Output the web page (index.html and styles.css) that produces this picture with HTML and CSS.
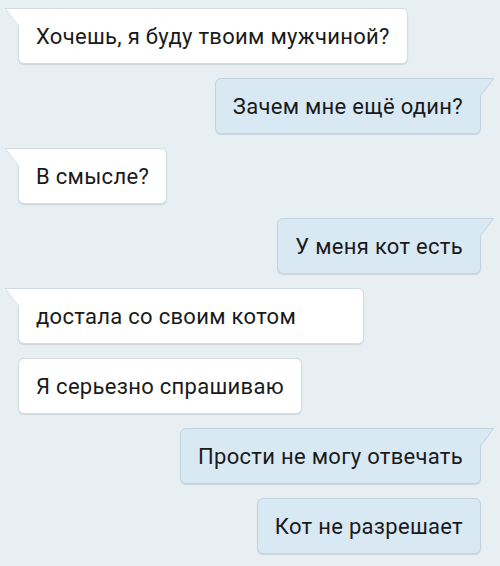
FILE: index.html
```html
<!DOCTYPE html>
<html lang="ru">
<head>
    <meta charset="UTF-8">
    <title>Чат</title>
    <link rel="stylesheet" href="styles.css">
</head>
<body>
    <div class="chat">
        <div class="msg in">
            <svg class="tail" width="14" height="19" viewBox="0 0 14 19"><path class="fill" d="M0 .5 H14 V19 Q7 10 .5 .5 Z"/><path class="edge" d="M14 .5 H.5 Q7 10 14 18"/></svg>
            Хочешь, я буду твоим мужчиной?
        </div>
        <div class="msg out">
            <svg class="tail" width="14" height="19" viewBox="0 0 14 19"><path class="fill" d="M14 .5 H0 V19 Q7 10 13.5 .5 Z"/><path class="edge" d="M0 .5 H13.5 Q7 10 0 18"/></svg>
            Зачем мне ещё один?
        </div>
        <div class="msg in">
            <svg class="tail" width="14" height="19" viewBox="0 0 14 19"><path class="fill" d="M0 .5 H14 V19 Q7 10 .5 .5 Z"/><path class="edge" d="M14 .5 H.5 Q7 10 14 18"/></svg>
            В смысле?
        </div>
        <div class="msg out">
            <svg class="tail" width="14" height="19" viewBox="0 0 14 19"><path class="fill" d="M14 .5 H0 V19 Q7 10 13.5 .5 Z"/><path class="edge" d="M0 .5 H13.5 Q7 10 0 18"/></svg>
            У меня кот есть
        </div>
        <div class="msg in wide">
            <svg class="tail" width="14" height="19" viewBox="0 0 14 19"><path class="fill" d="M0 .5 H14 V19 Q7 10 .5 .5 Z"/><path class="edge" d="M14 .5 H.5 Q7 10 14 18"/></svg>
            достала со своим котом
        </div>
        <div class="msg in">Я серьезно спрашиваю</div>
        <div class="msg out">
            <svg class="tail" width="14" height="19" viewBox="0 0 14 19"><path class="fill" d="M14 .5 H0 V19 Q7 10 13.5 .5 Z"/><path class="edge" d="M0 .5 H13.5 Q7 10 0 18"/></svg>
            Прости не могу отвечать
        </div>
        <div class="msg out">Кот не разрешает</div>
    </div>
</body>
</html>
```

FILE: styles.css
```css
body {
    margin: 0;
    background-color: #e8eff3;
    font-family: Roboto, 'Liberation Sans', sans-serif;
    color: #1a1a1a;
}

.chat {
    display: flex;
    flex-direction: column;
    gap: 14px;
    padding: 8px 19px 12px 18px;
}

.msg {
    position: relative;
    padding: 15px 17px 14px 17px;
    font-size: 22px;
    line-height: 25px;
    letter-spacing: 0.3px;
    border: 1px solid #d3dde3;
    border-radius: 6px;
    box-shadow: 0 1px 1px rgba(120, 140, 155, 0.25);
    white-space: nowrap;
}

.msg.in {
    align-self: flex-start;
    background-color: #fff;
}

.msg.out {
    align-self: flex-end;
    background-color: #d9e9f4;
    border-color: #c4d4df;
}

/* bubble stretched wider than its text */
.msg.wide {
    padding-right: 67px;
}

/* tail on first message of a group */
.tail {
    position: absolute;
    top: -1px;
}

.in .tail {
    left: -14px;
}

.out .tail {
    right: -14px;
}

.msg:has(.tail).in {
    border-top-left-radius: 0;
}

.msg:has(.tail).out {
    border-top-right-radius: 0;
}

.tail .edge {
    fill: none;
    stroke: #d3dde3;
    stroke-width: 1;
}

.in .tail .fill {
    fill: #fff;
}

.out .tail .fill {
    fill: #d9e9f4;
}

.out .tail .edge {
    stroke: #c4d4df;
}
```
